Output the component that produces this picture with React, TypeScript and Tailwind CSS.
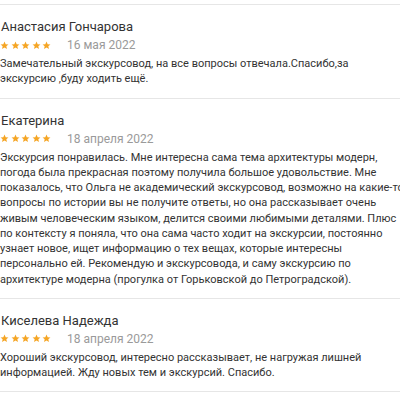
const reviews = [
  {
    name: "Анастасия Гончарова",
    date: "16 мая 2022",
    text: "Замечательный экскурсовод, на все вопросы отвечала.Спасибо,за экскурсию ,буду ходить ещё.",
  },
  {
    name: "Екатерина",
    date: "18 апреля 2022",
    text: "Экскурсия понравилась. Мне интересна сама тема архитектуры модерн, погода была прекрасная поэтому получила большое удовольствие. Мне показалось, что Ольга не академический экскурсовод, возможно на какие-то вопросы по истории вы не получите ответы, но она рассказывает очень живым человеческим языком, делится своими любимыми деталями. Плюс по контексту я поняла, что она сама часто ходит на экскурсии, постоянно узнает новое, ищет информацию о тех вещах, которые интересны персонально ей. Рекомендую и экскурсовода, и саму экскурсию по архитектуре модерна (прогулка от Горьковской до Петроградской).",
  },
  {
    name: "Киселева Надежда",
    date: "18 апреля 2022",
    text: "Хороший экскурсовод, интересно рассказывает, не нагружая лишней информацией. Жду новых тем и экскурсий. Спасибо.",
  },
];

function Stars() {
  return (
    <div className="flex gap-[1.5px] text-[#f5a524]">
      {[0, 1, 2, 3, 4].map((i) => (
        <svg key={i} viewBox="0 0 24 24" className="w-[9px] h-[9px]" fill="currentColor">
          <path d="M12 1.5l3.1 7 7.4.6-5.6 4.9 1.7 7.4L12 17.5l-6.6 3.9 1.7-7.4L1.5 9.1l7.4-.6z" />
        </svg>
      ))}
    </div>
  );
}

export default function App() {
  return (
    <div className="w-[400px] h-[400px] overflow-hidden bg-white font-['Roboto',sans-serif] text-[#333]">
      <div className="pt-1 w-[404px]">
        {reviews.map((r) => (
          <div key={r.name} className="border-t border-[#e6e6e6] pt-3 pb-[11px]">
            {/* name */}
            <div className="pl-px text-[13px] leading-5 text-[#333]">{r.name}</div>
            {/* rating + date */}
            <div className="flex items-center h-4">
              <Stars />
              <span className="ml-[16px] text-[12px] leading-4 text-[#9a9a9a]">{r.date}</span>
            </div>
            <p className="mt-[3px] text-[11px] leading-[15.25px] text-[#333]">{r.text}</p>
          </div>
        ))}
        <div className="border-t border-[#e6e6e6]" />
      </div>
    </div>
  );
}
